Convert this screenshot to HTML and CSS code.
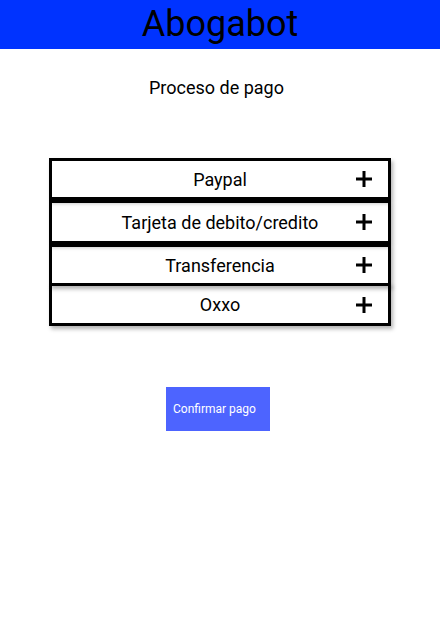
FILE: index.html
```html
<!DOCTYPE html>
<html lang="es">
<head>
<meta charset="utf-8">
<title>Abogabot</title>
<link rel="stylesheet" href="styles.css">
</head>
<body>
<header class="app-bar"><h1 class="app-title">Abogabot</h1></header>
<main class="content">
  <h2 class="page-title">Proceso de pago</h2>
  <ul class="methods">
    <li class="method m1"><span class="method-name">Paypal</span><svg class="plus" viewBox="0 0 18 18"><path d="M9 1v16M1 9h16"/></svg></li>
    <li class="method m2"><span class="method-name">Tarjeta de debito/credito</span><svg class="plus" viewBox="0 0 18 18"><path d="M9 1v16M1 9h16"/></svg></li>
    <li class="method m3"><span class="method-name">Transferencia</span><svg class="plus" viewBox="0 0 18 18"><path d="M9 1v16M1 9h16"/></svg></li>
    <li class="method m4"><span class="method-name">Oxxo</span><svg class="plus" viewBox="0 0 18 18"><path d="M9 1v16M1 9h16"/></svg></li>
  </ul>
  <div class="actions"><button class="confirm">Confirmar pago</button></div>
</main>
</body>
</html>
```
FILE: styles.css
```css
* { box-sizing: border-box; }
html, body { margin: 0; padding: 0; background: #fff; }
body { font-family: Roboto, "Noto Sans", sans-serif; color: #000; width: 440px; }
.app-bar { height: 49px; background: #0033ff; display: flex; align-items: center; justify-content: center; }
.app-title { margin: 0; font-weight: 400; font-size: 36px; line-height: 49px; color: #000; }
.content { display: flex; flex-direction: column; align-items: center; }
.page-title { margin: 29px 0 0; padding-right: 7px; font-weight: 400; font-size: 18px; line-height: 20px; }
.methods { list-style: none; margin: 60px 0 0; padding: 0; width: 342px; }
.method { display: grid; grid-template-columns: 1fr auto 1fr; align-items: center; border: 3px solid #000; background: #fff; box-shadow: 2px 3px 4px rgba(0,0,0,0.3); padding: 0 15px; font-size: 18px; position: relative; }
.method-name { grid-column: 2; }
.plus { grid-column: 3; justify-self: end; width: 18px; height: 18px; }
.plus path { stroke: #000; stroke-width: 3; fill: none; }
.m1 { height: 42px; z-index: 4; }
.m2 { height: 44px; z-index: 3; }
.m3 { height: 42px; z-index: 2; }
.m4 { height: 43px; margin-top: -3px; z-index: 1; }
.actions { margin-top: 61px; display: flex; justify-content: center; width: 100%; padding-right: 4px; }
.confirm { width: 104px; height: 44px; border: 0; background: #4d64ff; color: #fff; font-family: Roboto, sans-serif; font-size: 12px; padding: 0 0 0 7px; text-align: left; cursor: pointer; }
```
